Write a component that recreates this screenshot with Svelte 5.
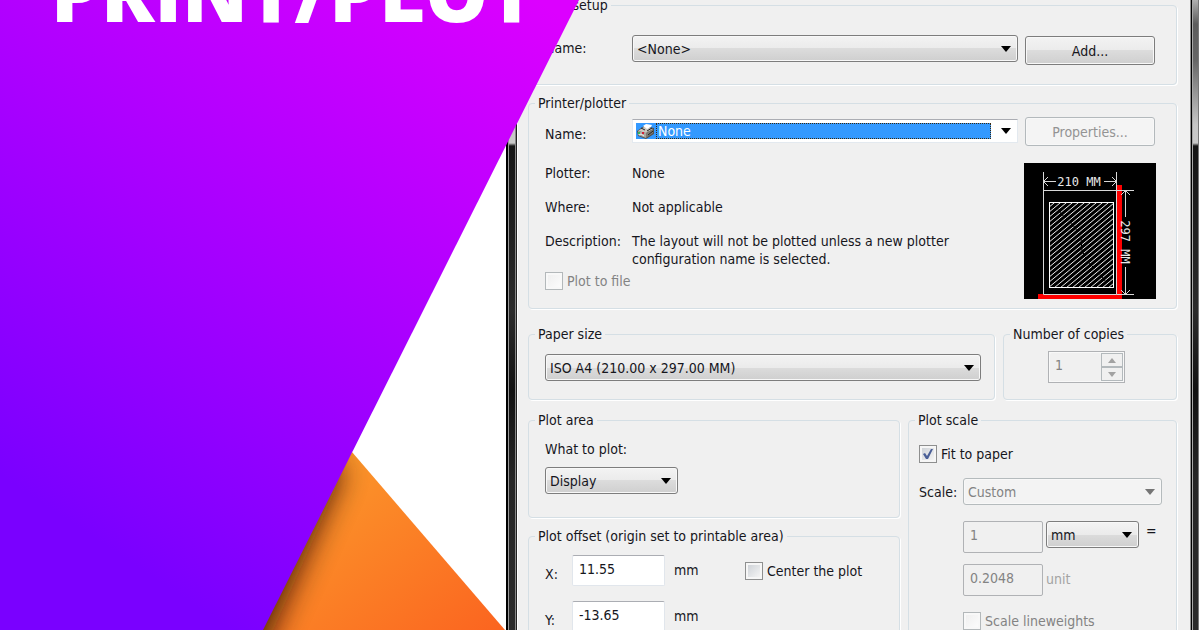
<script>
  let pageSetup = $state('<None>');
  let plotter = $state('None');
  let paper = $state('ISO A4 (210.00 x 297.00 MM)');
  let area = $state('Display');
  let unit = $state('mm');
  let offsetX = $state('11.55');
  let offsetY = $state('-13.65');
  let fit = $state(true);
  let center = $state(false);
</script>

<div class="page">
  <svg class="art" viewBox="0 0 1200 630" preserveAspectRatio="none" aria-hidden="true">
    <defs>
      <linearGradient id="violet" gradientUnits="userSpaceOnUse" x1="500" y1="-25" x2="115" y2="552">
        <stop offset="0" stop-color="#dc00ff" />
        <stop offset="1" stop-color="#7a00ff" />
      </linearGradient>
      <linearGradient id="orange" gradientUnits="userSpaceOnUse" x1="330" y1="470" x2="470" y2="650">
        <stop offset="0" stop-color="#fb952a" />
        <stop offset="1" stop-color="#fb6520" />
      </linearGradient>
      <clipPath id="wedge"><path d="M352 452L505 630H250Z" /></clipPath>
      <filter id="soft" x="-50%" y="-50%" width="200%" height="200%"><feGaussianBlur stdDeviation="14" /></filter>
    </defs>
    <path d="M352 452L505 630H250Z" fill="url(#orange)" />
    <g clip-path="url(#wedge)">
      <path d="M344 470L242 700L150 700L300 440Z" fill="#2a1000" opacity="0.8" filter="url(#soft)" />
    </g>
    <path d="M0 0H579L263 630H0Z" fill="url(#violet)" />
  </svg>

  <div class="poster"><h1>PRINT/PLOT</h1></div>

  <main class="dialog">
    <form class="body">
      <fieldset class="setup">
        <legend>Page setup</legend>
        <div class="row">
          <label for="setup-name">Name:</label>
          <span class="combo"><select id="setup-name" bind:value={pageSetup}><option>{'<None>'}</option></select></span>
          <button type="button">Add...</button>
        </div>
      </fieldset>

      <fieldset class="printer">
        <legend>Printer/plotter</legend>
        <div class="row">
          <label for="printer-name">Name:</label>
          <span class="combo picked">
            <span class="device">
              <svg viewBox="0 0 20 17" width="20" height="17" aria-hidden="true">
                <path d="M1 8L8 3L18 5V11L10 16L2 13Z" fill="#55534e" />
                <path d="M2 8L8 4L17 6L10 10Z" fill="#c9c6bf" />
                <path d="M2 8L10 10V15L2 12Z" fill="#aaa79f" />
                <path d="M10 10L17 6V10L10 15Z" fill="#7d7a73" />
                <path d="M7 3L10 1L16 2L15 4L11 6Z" fill="#fff" />
                <path d="M11 8L16 5M12 12L17 8M5 5L9 7" stroke="#222" />
                <path d="M2 9h2v2H2z" fill="#35b558" />
                <path d="M6 9h2v2H6z" fill="#d31f35" />
                <path d="M3 12L5 11L8 13" stroke="#eee" fill="none" />
              </svg>
            </span>
            <select id="printer-name" bind:value={plotter}><option>None</option></select>
          </span>
          <button type="button" disabled>Properties...</button>
        </div>
        <div class="details">
          <div class="facts">
            <dl>
              <dt>Plotter:</dt><dd>None</dd>
              <dt>Where:</dt><dd>Not applicable</dd>
              <dt>Description:</dt><dd>The layout will not be plotted unless a new plotter configuration name is selected.</dd>
            </dl>
            <label class="check off"><input type="checkbox" disabled />Plot to file</label>
          </div>
          <svg class="preview" viewBox="0 0 132 136" width="132" height="136" role="img" aria-label="Sheet 210 by 297 millimetres">
            <defs>
              <pattern id="hatch" width="6" height="5" patternUnits="userSpaceOnUse">
                <path d="M-1.2 6L7.2 -1M-1.2 1L1.2 -1M4.8 6L7.2 4" stroke="#eee" stroke-width="1" />
              </pattern>
            </defs>
            <rect width="132" height="136" fill="#000" />
            <path d="M93 22H98V136H14V131H93Z" fill="#f00" />
            <rect x="25.5" y="39.5" width="64" height="85" fill="url(#hatch)" stroke="#fff" />
            <path d="M27 44L33 45L38 52L45 57L52 66L57 75L58 88L64 99L73 108L82 119" fill="none" stroke="#000" stroke-dasharray="3 2" />
            <g fill="none" stroke="#d8d8d8">
              <path d="M19.5 9V131.5H92.5V9M19.5 27.5H110M92.5 131.5H110" />
              <path d="M19.5 18.5H32M24 14L19.5 18.5L24 23M80 18.5H92.5M88 14L92.5 18.5L88 23" />
              <path d="M101.5 27.5V54M97 32L101.5 27.5L106 32M101.5 104V131.5M97 127L101.5 131.5L106 127" />
            </g>
            <g class="dims">
              <text x="55" y="23">210 MM</text>
              <text transform="translate(97 79) rotate(90)">297 MM</text>
            </g>
          </svg>
        </div>
      </fieldset>

      <div class="media">
        <fieldset class="paper">
          <legend>Paper size</legend>
          <span class="combo"><select aria-label="Paper size" bind:value={paper}><option>ISO A4 (210.00 x 297.00 MM)</option></select></span>
        </fieldset>
        <fieldset class="copies">
          <legend>Number of copies</legend>
          <div class="spinner">
            <input type="text" aria-label="Number of copies" value="1" disabled />
            <span class="steps">
              <button type="button" aria-label="More" disabled><svg viewBox="0 0 8 5" width="8" height="5"><path d="M0 5L4 0L8 5Z" fill="#a2a2a2" /></svg></button>
              <button type="button" aria-label="Fewer" disabled><svg viewBox="0 0 8 5" width="8" height="5"><path d="M0 0L4 5L8 0Z" fill="#a2a2a2" /></svg></button>
            </span>
          </div>
        </fieldset>
      </div>

      <div class="plot">
        <div class="stack">
          <fieldset class="area">
            <legend>Plot area</legend>
            <label for="what">What to plot:</label>
            <span class="combo"><select id="what" bind:value={area}><option>Display</option></select></span>
          </fieldset>
          <fieldset class="offset">
            <legend>Plot offset (origin set to printable area)</legend>
            <div class="axis">
              <label for="off-x">X:</label>
              <input id="off-x" type="text" bind:value={offsetX} />
              <span>mm</span>
              <label class="check"><input type="checkbox" bind:checked={center} />Center the plot</label>
            </div>
            <div class="axis">
              <label for="off-y">Y:</label>
              <input id="off-y" type="text" bind:value={offsetY} />
              <span>mm</span>
            </div>
          </fieldset>
        </div>
        <fieldset class="scale">
          <legend>Plot scale</legend>
          <label class="check"><input type="checkbox" bind:checked={fit} />Fit to paper</label>
          <div class="ratio">
            <label for="scale">Scale:</label>
            <span class="combo off"><select id="scale" disabled><option>Custom</option></select></span>
          </div>
          <div class="measure">
            <input type="text" aria-label="Paper units" value="1" disabled />
            <span class="combo"><select aria-label="Unit" bind:value={unit}><option>mm</option></select></span>
            <span class="equals">=</span>
          </div>
          <div class="measure drawing">
            <input id="units" type="text" value="0.2048" disabled />
            <label class="faint" for="units">unit</label>
          </div>
          <label class="check off weights"><input type="checkbox" disabled />Scale lineweights</label>
        </fieldset>
      </div>
    </form>
  </main>
</div>

<style>
  :global(body) { background: #fff; overflow: hidden; }

  .page {
    position: relative;
    display: grid;
    grid-template-columns: 506fr 694fr;
    height: 100vh;
    overflow: hidden;
    font: 14px/18px "DejaVu Sans Condensed", "DejaVu Sans", sans-serif;
    font-stretch: condensed;
    color: #16161c;
  }
  .art { position: absolute; inset: 0; width: 100%; height: 100%; z-index: 1; pointer-events: none; }
  .poster { position: relative; z-index: 2; min-width: 0; padding-left: 51px; }
  h1 {
    margin: -48px 0 0;
    font: 800 79px/79px "Open Sans", sans-serif;
    color: #fff;
    white-space: nowrap;
  }

  .dialog {
    min-width: 0;
    padding: 0 10px 0 12px;
    background:
      linear-gradient(90deg, #000 0 2px, #999 2px 3px, transparent 3px 9px, #888 9px 10px, #222 10px 11px, #fff 11px 12px) left / 12px 100% no-repeat,
      linear-gradient(90deg, #8f8f8f 0 1px, #000 1px 2px, #a8a8a8 2px 3px, transparent 3px 8px, #777 8px 9px, #fff 9px) right / 10px 100% no-repeat,
      linear-gradient(#b0b0b0, #5c5c5c 24px, #666 60px, #c6c6c6 125px, #c9c9c9 143px, #151515 146px, #1b1b1b 200px, #2b2b2b 310px, #111 390px, #262626 480px, #2b2b2b 100%);
  }
  .body {
    display: flex;
    flex-direction: column;
    gap: 9px;
    min-height: 100%;
    padding: 0 13px 0 10px;
    background: #f0f0f0;
  }

  fieldset {
    min-width: 0;
    margin: 0;
    padding: 0 21px 0 16px;
    border: 1px solid #d5dfe5;
    border-radius: 4px;
    box-shadow: 1px 1px 0 #fff;
  }
  legend { margin-left: -10px; padding: 0 3px; height: 18px; }

  .row { display: grid; grid-template-columns: 87px minmax(0, 1fr) 130px; align-items: start; }
  .row label { line-height: 27px; }
  .setup { margin-top: -4px; padding-top: 21px; padding-bottom: 19px; }

  button {
    height: 29px;
    padding: 0;
    border: 1px solid #7d7d7d;
    border-radius: 3px;
    background: linear-gradient(#f3f3f3, #ebebeb 50%, #dcdcdc 50%, #cfcfcf);
    box-shadow: inset 0 0 0 1px #f8f8f8;
    font: inherit;
    color: inherit;
  }
  button:disabled { border-color: #b3b9bc; background: #f4f4f4; color: #939393; }
  .row button { margin-top: 1px; }

  .combo { position: relative; display: flex; height: 27px; }
  .row .combo { margin-right: 7px; }
  .combo::after {
    content: "";
    position: absolute;
    right: 7px;
    top: 11px;
    border: 5px solid transparent;
    border-top: 6px solid #000;
    border-bottom: 0;
    pointer-events: none;
  }
  select {
    flex: 1;
    min-width: 0;
    appearance: none;
    padding: 0 20px 0 4px;
    border: 1px solid #7d7d7d;
    border-radius: 3px;
    background: linear-gradient(#f3f3f3, #ebebeb 50%, #dcdcdc 50%, #cfcfcf);
    box-shadow: inset 0 0 0 1px #f8f8f8;
    font: inherit;
    color: inherit;
  }
  select:disabled { border-color: #b5bbbd; background: #f3f3f3; color: #838383; opacity: 1; }
  .combo.off::after { border-top-color: #757575; }

  .printer { padding-top: 5px; padding-bottom: 9px; margin-bottom: 7px; }
  .printer .row { height: 29px; }
  .printer .row button { margin-top: 0; }
  .printer .row label { line-height: 35px; }
  .combo.picked {
    box-sizing: border-box;
    height: 24px;
    margin-top: 2px;
    padding: 3px 26px 3px 3px;
    border: 1px solid #e3e9ef;
    border-top-color: #abadb3;
    background: #fff;
  }
  .combo.picked::after { top: 8px; right: 6px; }
  .device { display: flex; background: #3399ff; }
  .picked select {
    padding: 0 1px;
    border: 1px dotted #3a2a10;
    border-radius: 0;
    background: #3399ff;
    box-shadow: none;
    color: #fff;
    line-height: 14px;
  }

  .details { display: flex; justify-content: space-between; margin-top: 17px; margin-right: -1px; }
  .facts { display: flex; flex-direction: column; gap: 4px; padding-top: 1px; }
  dl { display: grid; grid-template-columns: 87px minmax(0, 340px); row-gap: 16px; margin: 0; }
  dd { margin: 0; }
  .preview { flex: none; }
  .dims text { font: 12px "DejaVu Sans Mono", monospace; fill: #e8e8e8; text-anchor: middle; }

  .check { display: flex; align-items: center; gap: 4px; height: 18px; }
  .check input {
    appearance: none;
    flex: none;
    box-sizing: border-box;
    width: 18px;
    height: 18px;
    margin: 0;
    border: 1px solid #8e8f8f;
    background: linear-gradient(135deg, #cfd3d8, #f4f4f4) content-box, #f6f6f6;
    padding: 2px;
  }
  .check input:checked {
    background:
      url("data:image/svg+xml,%3Csvg xmlns='http://www.w3.org/2000/svg' viewBox='0 0 16 16'%3E%3Cpath d='M3 8L5 7L7 10L11 3L13 3L8 13L6 13Z' fill='%234a5f97'/%3E%3C/svg%3E") center / 16px 16px no-repeat border-box,
      linear-gradient(135deg, #cfd3d8, #f4f4f4) content-box, #f6f6f6;
  }
  .check input:disabled { border-color: #b3b8ba; background: linear-gradient(135deg, #f0f0f0, #fbfbfb) content-box, #f8f8f8; }
  .off { color: #838383; }

  input[type="text"] {
    box-sizing: border-box;
    min-width: 0;
    height: 31px;
    padding: 0 6px 4px;
    border: 1px solid #e1e6ec;
    border-top-color: #abadb3;
    border-radius: 2px;
    background: #fff;
    font: inherit;
    color: inherit;
  }
  input[type="text"]:disabled { border-color: #b0b2b5; background: #f0f0f0; color: #838383; }

  .media { display: grid; grid-template-columns: minmax(0, 1fr) 174px; gap: 8px; margin-bottom: 2px; }
  .paper { padding: 11px 13px 18px 16px; }
  .copies { padding: 8px 0 0 16px; }
  .spinner { display: flex; box-sizing: border-box; width: 77px; height: 32px; margin-left: 28px; padding: 1px; border: 1px solid #b0b2b5; background: #f8f8f8; }
  .spinner input[type="text"] { flex: 1; height: 28px; border: 0; padding-left: 5px; }
  .steps { display: grid; width: 22px; }
  .steps button { display: grid; place-items: center; height: 14px; border-radius: 0; background: #f0f0f0; box-shadow: none; }

  .plot { display: grid; grid-template-columns: minmax(0, 372fr) minmax(0, 269fr); gap: 8px; flex: 1; }
  .stack { display: flex; flex-direction: column; gap: 9px; }
  .area { padding-top: 11px; padding-bottom: 23px; }
  .area label { display: block; margin-bottom: 9px; }
  .area .combo { width: 133px; }
  .offset { display: flex; flex-direction: column; gap: 15px; padding-top: 10px; padding-bottom: 20px; }
  .axis { display: grid; grid-template-columns: 27px 93px 80px 1fr; align-items: center; }
  .axis > label:first-child { padding-top: 7px; }
  .axis > span { padding: 0 0 2px 9px; }
  .axis .check { padding-top: 1px; }

  .scale { padding: 16px 14px 20px 10px; }
  .scale legend { margin-left: -4px; }
  .ratio { display: grid; grid-template-columns: 44px minmax(0, 1fr); align-items: center; margin: 15px 0 16px; }
  .measure { display: flex; align-items: start; gap: 3px; padding-left: 44px; }
  .measure input[type="text"] { width: 80px; height: 32px; }
  .measure .combo { width: 93px; }
  .equals { padding-left: 4px; line-height: 20px; }
  .drawing { margin: 11px 0 16px; }
  .faint { line-height: 30px; color: #a3a3a3; }
  .weights { padding-left: 44px; }
</style>
